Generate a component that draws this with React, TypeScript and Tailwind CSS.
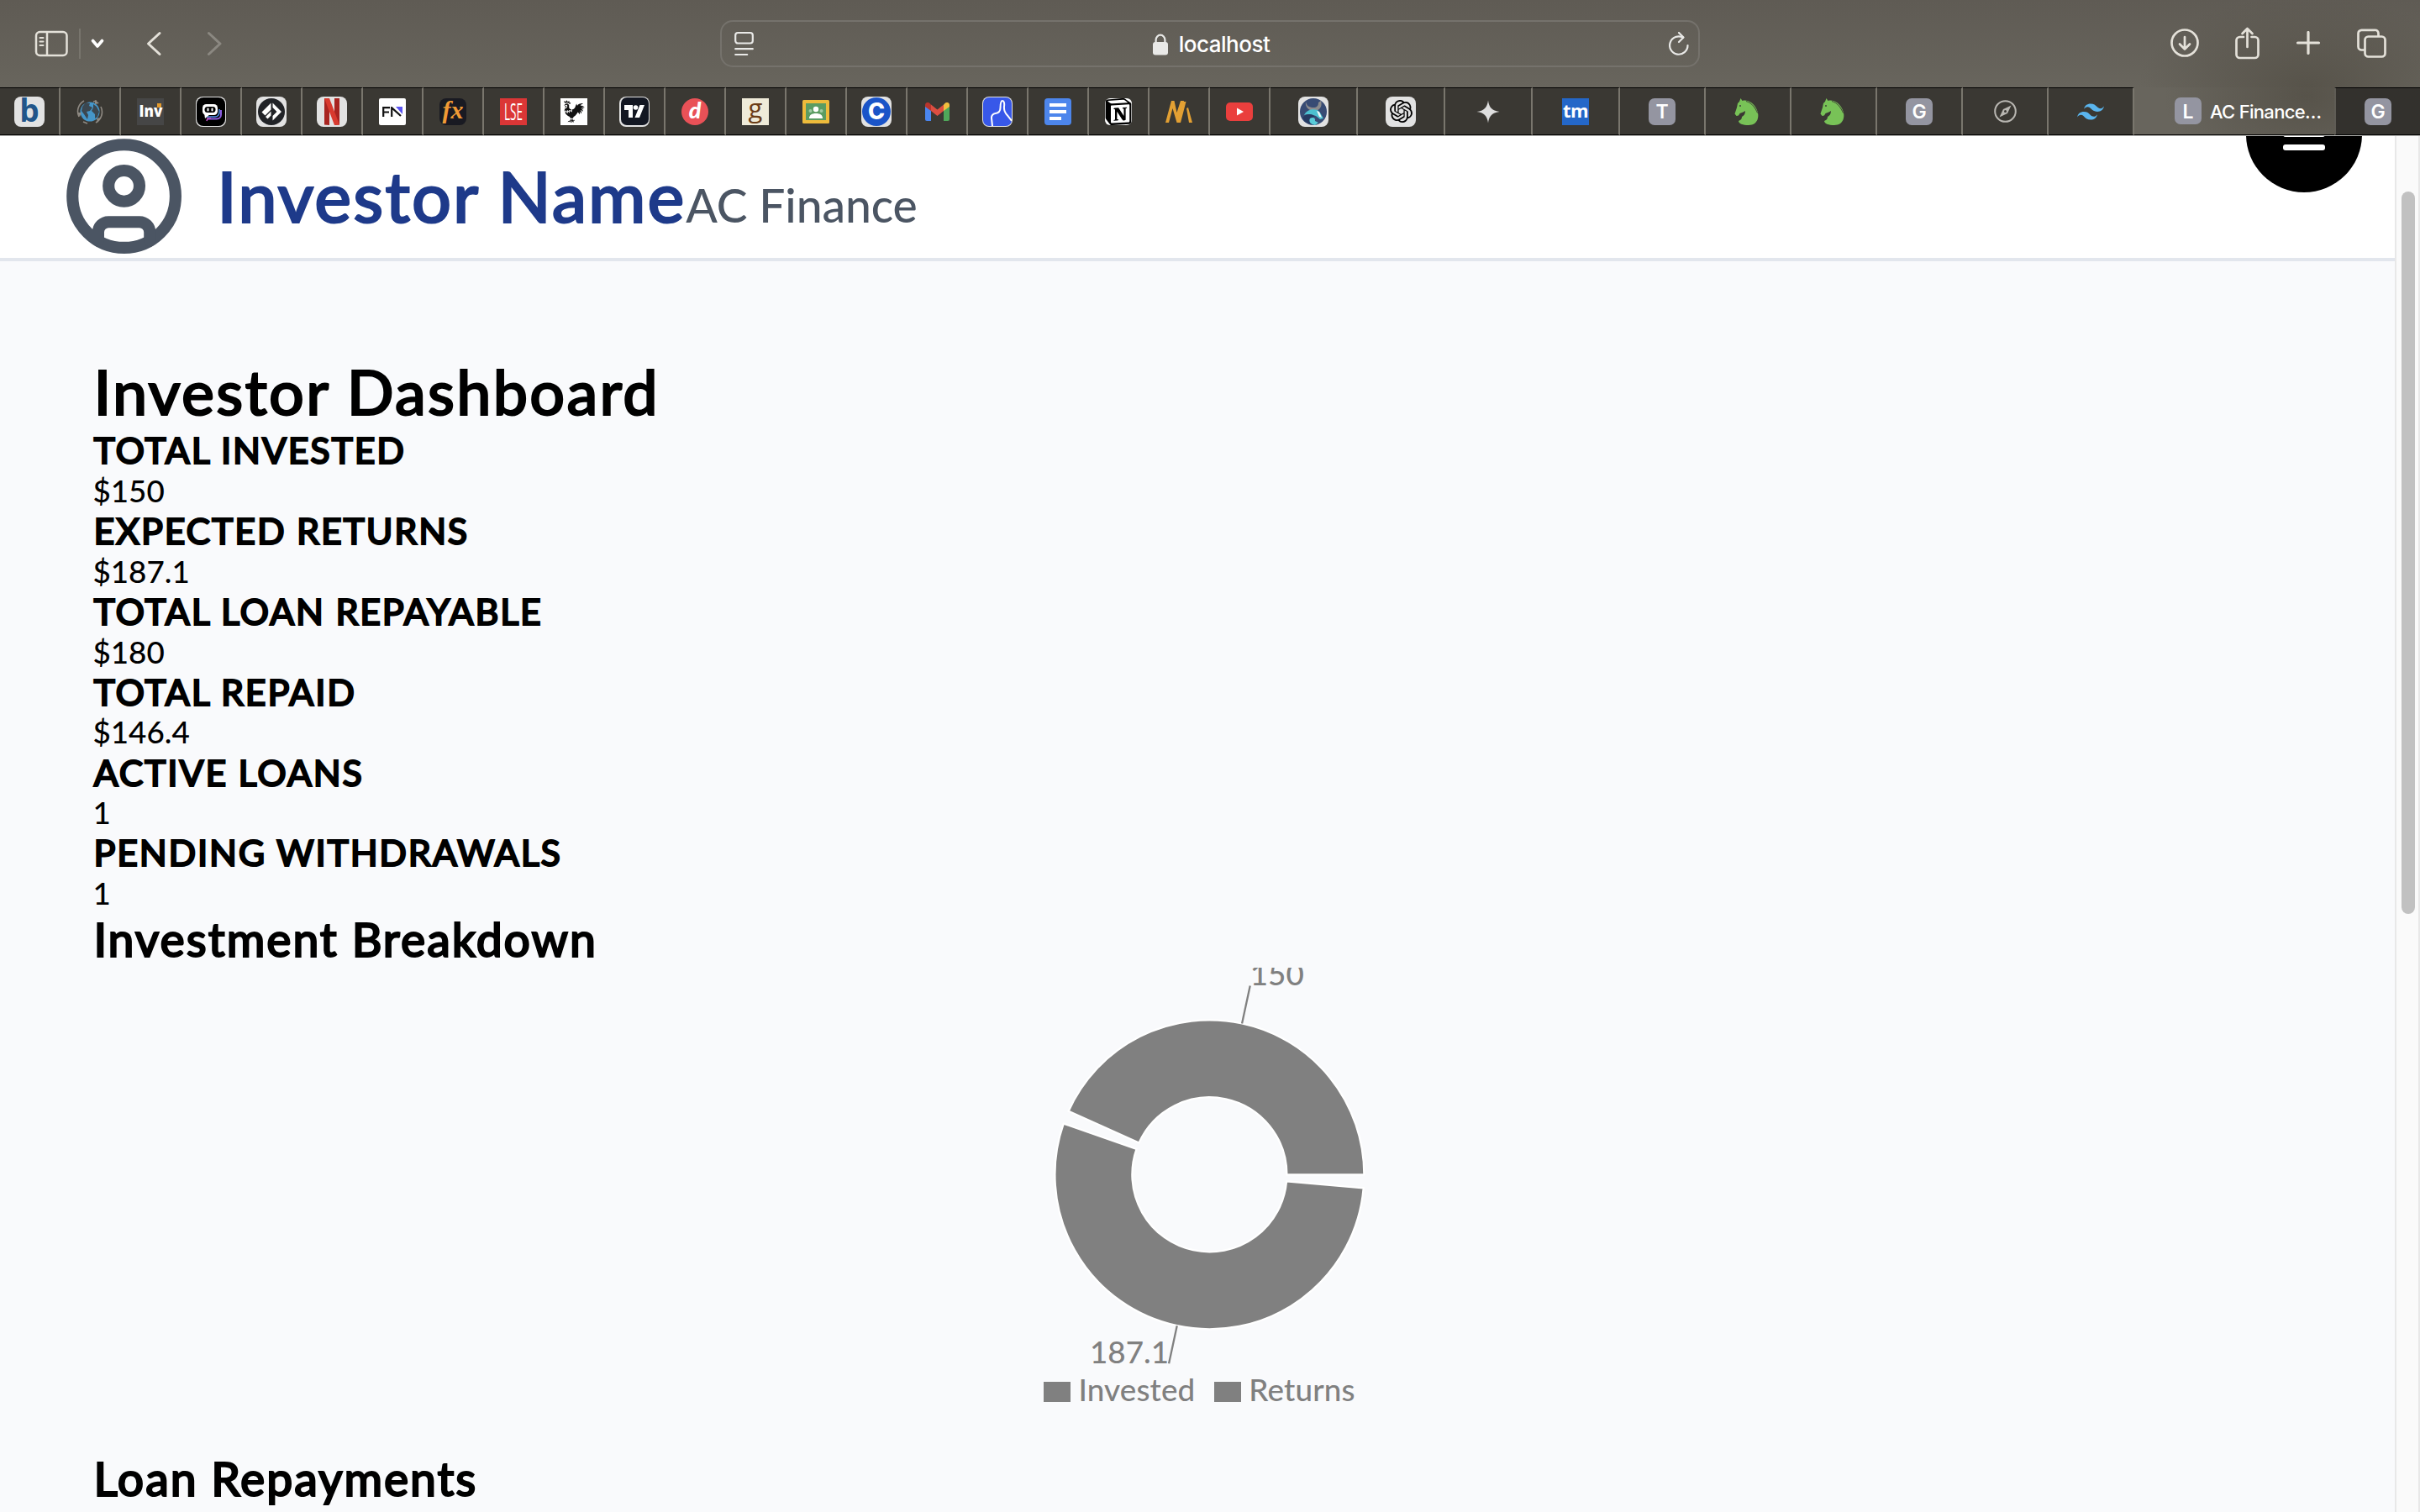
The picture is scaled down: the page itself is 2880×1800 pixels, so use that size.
import React from "react";
import { CircleUser } from "lucide-react";
import { SiNotion, SiOpenai, SiTailwindcss } from "react-icons/si";
import { GiRooster } from "react-icons/gi";

type Kids = { children: React.ReactNode };

const Plate = ({ children }: Kids) => (
  <div className="flex size-9 items-center justify-center rounded-[8px] bg-[#e2e2e2]">{children}</div>
);

const Letter = ({ children }: Kids) => (
  <div className="flex size-8 shrink-0 items-center justify-center rounded-[7px] bg-[#9495a1] pt-0.5 font-['Inter'] text-[23px] leading-none font-semibold text-white">
    {children}
  </div>
);

const Globe = () => (
  <svg className="size-8" viewBox="0 0 32 32">
    <circle cx="16" cy="16" r="11.5" fill="#4596c9" />
    <path d="M7 10l4-5 5 1-1 3 4 2-3 4-4 1 2 4-1 5-4-6-3-4zM20 7l4 3 3 6-2 6-3 2 0-5-4-4 2-4z" fill="#3b4750" />
    <path d="M3 22A14.5 14.5 0 0 1 9 3M29 10a14.5 14.5 0 0 1-6 19M24 3l-4 1M13 30l-5-2" fill="none" stroke="#8f8a83" strokeWidth="1.6" />
    <path d="M1 17h5l-2 5zM27 6l-5-4v5zM29 23l-5 1 1 5z" fill="#8f8a83" />
  </svg>
);

const Bot = () => (
  <svg className="size-[34px]" viewBox="0 0 34 34">
    <rect width="34" height="34" rx="8" fill="#000" />
    <path d="M13 25.5h11a5 5 0 0 0 5-5V15" fill="none" stroke="#8a5be0" strokeWidth="2" />
    <path d="M12 23h10a5 5 0 0 0 5-5v-4" fill="none" stroke="#4f8fe6" strokeWidth="1.6" />
    <path d="M12 28l1-3h4" fill="none" stroke="#c14fc2" strokeWidth="1.6" />
    <rect x="7" y="8" width="18" height="13" rx="4.5" fill="#fff" />
    <path d="M9 18l1 7 6-5z" fill="#fff" />
    <rect x="9.5" y="11" width="13" height="7" rx="3.5" fill="#000" />
    <rect x="12.500" y="12.500" width="2" height="4" rx="1" fill="#fff" />
    <rect x="17.500" y="12.500" width="2" height="4" rx="1" fill="#fff" />
  </svg>
);

const Diamond = () => (
  <svg className="size-8" viewBox="0 0 32 32">
    <circle cx="16" cy="16" r="16" fill="#212327" />
    <path d="M15.500 5.500L4.500 16.500l4 4L15.500 13.500zM15.500 15.500L9 22l2.500 2.500 4-4z" fill="#fff" />
    <path d="M17.500 5.500L28 16 17.500 26.500v-5.500L22.500 16l-5-5z" fill="#fff" />
  </svg>
);

const Classroom = () => (
  <svg className="h-7 w-8" viewBox="0 0 32 28">
    <rect width="32" height="28" rx="1.500" fill="#eebb3b" />
    <rect x="4" y="4" width="24" height="20" fill="#5b9c62" />
    <circle cx="16" cy="11" r="3.200" fill="#fff" />
    <circle cx="9.500" cy="13" r="2" fill="#9fcaa2" />
    <circle cx="22.500" cy="13" r="2" fill="#9fcaa2" />
    <path d="M8 22c0-4 3-6 8-6s8 2 8 6z" fill="#fff" />
  </svg>
);

const Gmail = () => (
  <svg className="h-[22px] w-[29px]" viewBox="0 0 29 22">
    <path d="M0 4v16a2 2 0 0 0 2 2h5V9z" fill="#4a86ef" />
    <path d="M29 4v16a2 2 0 0 1-2 2h-5V9z" fill="#4fa75a" />
    <path d="M22 2.500V10l7-5V3c0-3-3.500-4-5.500-2z" fill="#f0bf3e" />
    <path d="M0 3v2l7 5V2.500L5.500 1C3.500-1 0 0 0 3z" fill="#b8352d" />
    <path d="M7 2.500V10l7.500 6L22 10V2.500L14.500 8.500z" fill="#dc4e41" />
  </svg>
);

const Knot = () => (
  <svg className="size-[34px]" viewBox="0 0 34 34">
    <rect width="34" height="34" rx="7" fill="#3858e9" />
    <path d="M11 34L10 24.500a5 5 0 0 1 4.500-5.500c4-.6 6-2 6-6.500 0-5 .5-8.500 2.500-8.500s2.500 3 2 7c-.5 5 1 7.500 4 10.500L34 28" fill="none" stroke="#fff" strokeWidth="2" />
  </svg>
);

const Docs = () => (
  <svg className="size-8" viewBox="0 0 32 32">
    <rect width="32" height="32" rx="4" fill="#4d86ec" />
    <path d="M6 8h20M6 16h20M6 24h14" stroke="#fff" strokeWidth="4" />
  </svg>
);

const Slashes = () => (
  <svg className="h-[26px] w-8" viewBox="0 0 32 26">
    <path d="M0 26L7 0h3.500l3 14L18 0h4l-4.500 26h-4L8.500 9 4 26z" fill="#e3a033" />
    <path d="M14 26L20.500 1h4L18 26zM25 9l2-1 5 18h-4z" fill="#e3a033" />
  </svg>
);

const YouTube = () => (
  <svg className="h-[22px] w-8" viewBox="0 0 32 22">
    <rect width="32" height="22" rx="5" fill="#ea3f3d" />
    <path d="M13 6.500v9l8-4.500z" fill="#fff" />
  </svg>
);

const Bull = () => (
  <svg className="size-8" viewBox="0 0 32 32">
    <circle cx="16" cy="16" r="16" fill="#374b74" />
    <path d="M7 4c1 5 4 7 9 7 4 0 6-2 6-6l3-2c2 6-1 12-8 12C10 15 6 10 7 4z" fill="#8b8b8d" />
    <path d="M5 20c3-6 9-8 16-6l3 3 4 7-4 1-5-4c-5-2-10-3-14-1z" fill="#4cc0d0" />
    <path d="M3 23c5-5 11-5 15-1-3 0-5 2-4 5l3 4C10 31 5 28 3 23z" fill="#263a62" />
    <path d="M12 24c3-2 7-1 6 3l4 2-4 3c-5-1-8-4-6-8z" fill="#59cbd8" />
    <path d="M20 15l3 1 3 7-3-1z" fill="#f2f7f8" />
  </svg>
);

const Sparkle = () => (
  <svg className="size-7" viewBox="0 0 28 28">
    <path d="M14 0.500c1 8.500 5 12.500 13.500 13.500C19 15 15 19 14 27.500 13 19 9 15 .5 14 9 13 13 9 14 .5z" fill="#dedede" />
  </svg>
);

const Horse = () => (
  <svg className="size-8" viewBox="0 0 32 32">
    <path d="M7.500 0l2 3C16 1 23 6 26 12c5 9 2 20-9 20-7 0-12-2-12-5 3-1 4-3 4-5 2-1 4-3 4-7-3 2-5 2-6.500 3L5 20.500 2.500 21 .5 18.500 3 11l1-5 2-2z" fill="#78c257" />
    <path d="M14 3.500c7 2 11 8 13.500 14" fill="none" stroke="#3a3833" strokeWidth="0.900" />
    <circle cx="7" cy="9" r="0.900" fill="#3a3833" />
  </svg>
);

const Compass = () => (
  <svg className="size-[27px]" viewBox="0 0 27 27">
    <circle cx="13.500" cy="13.500" r="12.300" fill="none" stroke="#b9b7b2" strokeWidth="2" />
    <path d="M20.500 6.500L16 16l-9.500 4.500L11 11z" fill="#b9b7b2" />
    <circle cx="13.500" cy="13.500" r="1.500" fill="#3a3833" />
  </svg>
);

const narrow: React.ReactNode[] = [
  <Plate>
    <span className="-mt-1 font-['Open_Sans'] text-[37px] leading-[32px] font-bold text-[#215589]">b</span>
  </Plate>,
  <Globe />,
  <div className="relative flex size-8 items-center justify-center bg-[#464646] font-['Open_Sans'] text-[19px] leading-none font-extrabold text-white">
    <span className="inline-block scale-x-[0.9]">Inv</span>
    <span className="absolute top-1.5 right-[3px] size-[5px] bg-[#e39a2d]" />
  </div>,
  <Plate><Bot /></Plate>,
  <Plate><Diamond /></Plate>,
  <Plate>
    <svg className="h-8 w-[18px]" viewBox="0 0 18 32">
      <path d="M0 0h6v32l-6-.6zM12 0h6v31.400l-6 .6z" fill="#a82420" />
      <path d="M0 0h6l12 31.400-6 .6z" fill="#d83a2e" />
    </svg>
  </Plate>,
  <div className="flex size-8 items-center justify-center rounded-[2px] bg-white">
    <svg className="h-3 w-6" viewBox="0 0 24 12">
      <path d="M1.200 12V1.200H9M1.200 6.500H8M11.200 12V1.200L22 11" fill="none" stroke="#111" strokeWidth="2.200" />
      <path d="M16 0h8v9z" fill="#5b55f0" />
    </svg>
  </div>,
  <div className="flex size-8 items-center justify-center rounded-[8px] bg-[#191a22] pb-1 font-['Liberation_Serif'] text-[30px] leading-none font-bold text-[#f09a35] italic">
    fx
  </div>,
  <div className="flex size-8 items-center justify-center bg-[#db3636] font-['Open_Sans'] text-[27px] leading-none text-white">
    <span className="inline-block scale-x-[0.5]">LSE</span>
  </div>,
  <div className="flex size-8 items-center justify-center bg-white text-[#111]">
    <GiRooster className="size-[29px] -scale-x-100" />
  </div>,
  <Plate>
    <div className="flex size-[33px] items-center justify-center rounded-[7px] bg-[#131722] text-white">
      <svg className="h-[15px] w-6" viewBox="0 0 24 15">
        <path d="M0 0h10v15H5V6H0zM18.500 0H24l-6 15h-5.500z" fill="#fff" />
        <circle cx="13.500" cy="3" r="2.800" fill="#fff" />
      </svg>
    </div>
  </Plate>,
  <div className="flex size-8 items-center justify-center rounded-full bg-[#e95157] pb-1 font-['Lato'] text-[27px] leading-none font-black text-white italic">
    d
  </div>,
  <div className="flex size-8 items-center justify-center bg-[#efebd9] pb-2 font-['Open_Sans'] text-[31px] leading-none text-[#6b3d17]">g</div>,
  <Classroom />,
  <Plate>
    <div className="flex size-[34px] items-center justify-center rounded-full bg-[#1a54c8] font-['Inter'] text-[27px] leading-none font-extrabold text-white">
      C
    </div>
  </Plate>,
  <Gmail />,
  <Plate><Knot /></Plate>,
  <Docs />,
  <div className="flex size-8 items-center justify-center">
    <SiNotion className="size-8 rounded-md bg-white text-black" />
  </div>,
  <Slashes />,
  <YouTube />,
];

const wide: React.ReactNode[] = [
  <Plate><Bull /></Plate>,
  <Plate><SiOpenai className="size-[27px] text-black" /></Plate>,
  <Sparkle />,
  <div className="flex size-8 items-center justify-center bg-[#2467c8] pb-1 font-['Open_Sans'] text-[22px] leading-none font-bold tracking-tight text-white">
    tm
  </div>,
];

const medium: React.ReactNode[] = [
  <Letter>T</Letter>,
  <Horse />,
  <Horse />,
  <Letter>G</Letter>,
  <Compass />,
  <SiTailwindcss className="size-8 text-[#5ab5ee]" />,
];

const Toolbar = () => (
  <div className="flex h-[104px] items-center bg-[radial-gradient(ellipse_200px_110px_at_2745px_104px,#57534a_0%,transparent_100%),linear-gradient(#5f5b54,#68655d)]">
    <div className="flex w-[857px] items-center pl-[41px] text-[#e4e1d9]">
      <svg className="h-8 w-10" viewBox="0 0 40 32" fill="none" stroke="currentColor" strokeWidth="2.500">
        <rect x="2" y="2" width="36.500" height="28" rx="4.500" />
        <path d="M15 2v28" />
        <path d="M6.500 9h4M6.500 13.500h4M6.500 18h4" strokeWidth="2" strokeLinecap="round" />
      </svg>
      <div className="ml-[13px] h-9 w-[2px] bg-[#78756d]" />
      <svg className="ml-[11px] h-3 w-[18px]" viewBox="0 0 18 12" fill="none" stroke="#fff" strokeWidth="3.600" strokeLinecap="round" strokeLinejoin="round">
        <path d="M3.500 2.500L9 9l5.500-6.500" />
      </svg>
      <svg className="ml-[48px] h-[30px] w-5" viewBox="0 0 20 30" fill="none" stroke="currentColor" strokeWidth="3" strokeLinecap="round" strokeLinejoin="round">
        <path d="M17 2.500L3.500 15 17 27.500" />
      </svg>
      <svg className="ml-[52px] h-[30px] w-5" viewBox="0 0 20 30" fill="none" stroke="#8b8881" strokeWidth="3" strokeLinecap="round" strokeLinejoin="round">
        <path d="M3.500 2.500L17 15 3.500 27.500" />
      </svg>
    </div>
    <div className="flex h-14 w-[1166px] items-center justify-between rounded-[15px] border-2 border-[#75726c] pr-[11px] pl-[15px] text-[#e9e9e7]">
      <svg className="h-[30px] w-[23px]" viewBox="0 0 23 30" fill="none" stroke="currentColor" strokeWidth="2.200" strokeLinecap="round">
        <rect x="1.200" y="2" width="20.600" height="12.500" rx="3" />
        <path d="M1.200 21.200h20.600M1.200 28h14" />
      </svg>
      <div className="flex items-center">
        <svg className="mt-0.5 h-[26px] w-[18px]" viewBox="0 0 18 26">
          <rect y="10" width="18" height="15.500" rx="3" fill="currentColor" />
          <path d="M3.600 12V7.500a5.400 5.800 0 0 1 10.800 0V12" fill="none" stroke="currentColor" strokeWidth="2.200" />
        </svg>
        <span className="mt-0.5 ml-[13px] font-['Inter'] text-[26px] leading-none font-medium tracking-[-0.5px] text-white">localhost</span>
      </div>
      <svg className="h-[30px] w-[24px]" viewBox="0 0 24 30" fill="none" stroke="currentColor" strokeWidth="2.200" strokeLinecap="round" strokeLinejoin="round">
        <path d="M22.500 17A10.700 10.700 0 1 1 17 7.700" />
        <path d="M12 2l5.500 5.500L12 13" />
      </svg>
    </div>
    <div className="ml-[560px] flex items-center text-[#e4e1d9]">
      <svg className="h-[36px] w-[36px]" viewBox="0 0 36 36" fill="none" stroke="currentColor" strokeWidth="2.700" strokeLinecap="round" strokeLinejoin="round">
        <circle cx="17" cy="17" r="15.500" />
        <path d="M17 10v14.500M11 18.500l6 6 6-6" />
      </svg>
      <svg className="ml-[40px] h-[40px] w-[32px]" viewBox="0 0 32 40" fill="none" stroke="currentColor" strokeWidth="2.700" strokeLinecap="round" strokeLinejoin="round">
        <path d="M11 12H6.500A4 4 0 0 0 2.500 16v17a4 4 0 0 0 4 4h18a4 4 0 0 0 4-4V16a4 4 0 0 0-4-4h-4" />
        <path d="M15.500 24V2M9.500 8l6-6 6 6" />
      </svg>
      <svg className="ml-[41px] h-[30px] w-[30px]" viewBox="0 0 30 30" fill="none" stroke="currentColor" strokeWidth="3.200" strokeLinecap="round">
        <path d="M15 1.500v25M2.500 14h25" />
      </svg>
      <svg className="ml-[42px] h-[36px] w-[38px]" viewBox="0 0 38 36" fill="none" stroke="currentColor" strokeWidth="2.700" strokeLinejoin="round">
        <rect x="10.500" y="9.500" width="24" height="24" rx="4" />
        <path d="M10 25.500H6.500A4 4 0 0 1 2.500 21.500V6A4 4 0 0 1 6.500 1.800H22A4 4 0 0 1 26.500 6v3" />
      </svg>
    </div>
  </div>
);

const TabStrip = () => (
  <div className="flex h-[58px] border-b border-b-[#b4b4b2] bg-[#3a3833]">
    {narrow.map((icon, i) => (
      <div key={i} className="flex w-[72px] shrink-0 items-center justify-center border-t border-r-2 border-b border-t-black border-r-[#79766d] border-b-black">
        {icon}
      </div>
    ))}
    {wide.map((icon, i) => (
      <div key={i} className="flex w-[104px] shrink-0 items-center justify-center border-t border-r-2 border-b border-t-black border-r-[#79766d] border-b-black">
        {icon}
      </div>
    ))}
    {medium.map((icon, i) => (
      <div key={i} className="flex w-[102px] shrink-0 items-center justify-center border-t border-r-2 border-b border-t-black border-r-[#79766d] border-b-black">
        {icon}
      </div>
    ))}
    <div className="flex w-[238px] shrink-0 items-center border-b border-b-black bg-[radial-gradient(ellipse_170px_110px_at_205px_10px,#57534a_0%,#68655d_100%)] pl-[48px]">
      <Letter>L</Letter>
      <span className="mt-0.5 ml-[10px] font-['Inter'] text-[22px] leading-none font-medium tracking-[-0.7px] whitespace-nowrap text-white">AC Finance…</span>
    </div>
    <div className="flex grow items-center justify-center border-t border-b border-l-2 border-t-black border-b-black border-l-[#5f5c55] bg-[#33312d]">
      <Letter>G</Letter>
    </div>
  </div>
);

const MenuButton = () => (
  <div className="absolute top-[-71px] left-[2672.500px] flex size-[138px] flex-col items-center justify-center gap-[9px] rounded-full bg-black pb-[2px]">
    <span className="h-[7px] w-[50px] rounded-[3px] bg-white" />
    <span className="h-[7px] w-[50px] rounded-[3px] bg-white" />
    <span className="h-[7px] w-[50px] rounded-[3px] bg-white" />
  </div>
);

const stats = [
  { label: "TOTAL INVESTED", value: "$150" },
  { label: "EXPECTED RETURNS", value: "$187.1" },
  { label: "TOTAL LOAN REPAYABLE", value: "$180" },
  { label: "TOTAL REPAID", value: "$146.4" },
  { label: "ACTIVE LOANS", value: "1" },
  { label: "PENDING WITHDRAWALS", value: "1" },
];

const CX = 1329.4;
const CY = 246.3;

const at = (r: number, deg: number) => {
  const a = (deg * Math.PI) / 180;
  return [CX + r * Math.cos(a), CY - r * Math.sin(a)];
};

const sector = (from: number, to: number) => {
  const [x0, y0] = at(184, from);
  const [x1, y1] = at(184, to);
  const [x2, y2] = at(92, to);
  const [x3, y3] = at(92, from);
  const big = to - from > 180 ? 1 : 0;
  return `M${x0},${y0}A184,184 0 ${big} 0 ${x1},${y1}L${x2},${y2}A92,92 0 ${big} 1 ${x3},${y3}Z`;
};

const slices = [
  { name: "Invested", value: 150, from: 0, to: 155.74, anchor: "start" as const },
  { name: "Returns", value: 187.1, from: 160.74, to: 355, anchor: "end" as const },
];

const DonutChart = () => (
  <div className="relative h-[575px] w-[2658px]">
    <svg className="block h-[575px] w-[2658px] overflow-hidden font-['Lato'] text-[36.800px]">
      {slices.map((s) => {
        const mid = (s.from + s.to) / 2;
        const [lx0, ly0] = at(184, mid);
        const [lx1, ly1] = at(230, mid);
        return (
          <g key={s.name}>
            <path d={sector(s.from, s.to)} fill="#808080" stroke="#fff" strokeWidth="2.3" />
            <path d={`M${lx0},${ly0}L${lx1},${ly1}`} stroke="#808080" strokeWidth="2.3" />
            <text x={lx1} y={ly1} textAnchor={s.anchor} fill="#808080">
              {s.value}
            </text>
          </g>
        );
      })}
    </svg>
    <div className="absolute bottom-[50.500px] left-[1132px] flex items-center gap-[23px] font-['Lato'] text-[36.800px] leading-[44px] tracking-[0.150px] text-[#808080]">
      {slices.map((s) => (
        <div key={s.name} className="flex items-center">
          <span className="mt-1.5 mr-[9px] h-6 w-8 bg-[#808080]" />
          {s.name}
        </div>
      ))}
    </div>
  </div>
);

export default function App() {
  return (
    <div className="flex h-[1800px] w-[2880px] flex-col overflow-hidden bg-[#f9fafc]">
      <Toolbar />
      <TabStrip />
      <div className="relative flex min-h-0 grow overflow-hidden">
        <main className="w-[2850px] shrink-0 overflow-hidden font-['Lato'] text-[36.800px] leading-[1.2] font-medium text-black">
          <header className="flex h-[149px] items-center border-b-4 border-[#e2e6ed] bg-white pb-0.5 pl-[73.600px]">
            <CircleUser className="size-[147.200px] shrink-0 text-[#4b5563]" strokeWidth={2.3} />
            <h1 className="ml-[37.500px] pt-px text-[82.800px] leading-[1.2] font-medium tracking-[2px] whitespace-nowrap text-[#1e3a8a]">
              <span className="[-webkit-text-stroke:2px_#1e3a8a]">Investor Name</span>
              <span className="text-[55.200px] font-medium tracking-[-0.1px] text-[#4b5563]">AC Finance</span>
            </h1>
          </header>
          <section className="pt-[111px] pl-[110.400px]">
            <h1 className="pl-px text-[73.600px] font-medium tracking-[2.250px] [-webkit-text-stroke:2px_#000]">Investor Dashboard</h1>
            {stats.map((s) => (
              <div key={s.label}>
                <h3 className="pl-px text-[43.060px] font-medium tracking-[1.750px] [-webkit-text-stroke:2px_#000]">{s.label}</h3>
                <p>{s.value}</p>
              </div>
            ))}
            <h2 className="pl-px text-[55.200px] font-medium tracking-[1.950px] [-webkit-text-stroke:2px_#000]">Investment Breakdown</h2>
            <DonutChart />
            <h2 className="pl-px text-[55.200px] font-medium tracking-[1.900px] [-webkit-text-stroke:2px_#000]">Loan Repayments</h2>
          </section>
        </main>
        <div className="relative w-[30px] shrink-0 border-r-2 border-l-2 border-[#e8e8e8] bg-[#fafafa]">
          <div className="absolute top-[66px] left-[6px] h-[860px] w-4 rounded-full bg-[#c1c1c1]" />
        </div>
        <MenuButton />
      </div>
    </div>
  );
}
